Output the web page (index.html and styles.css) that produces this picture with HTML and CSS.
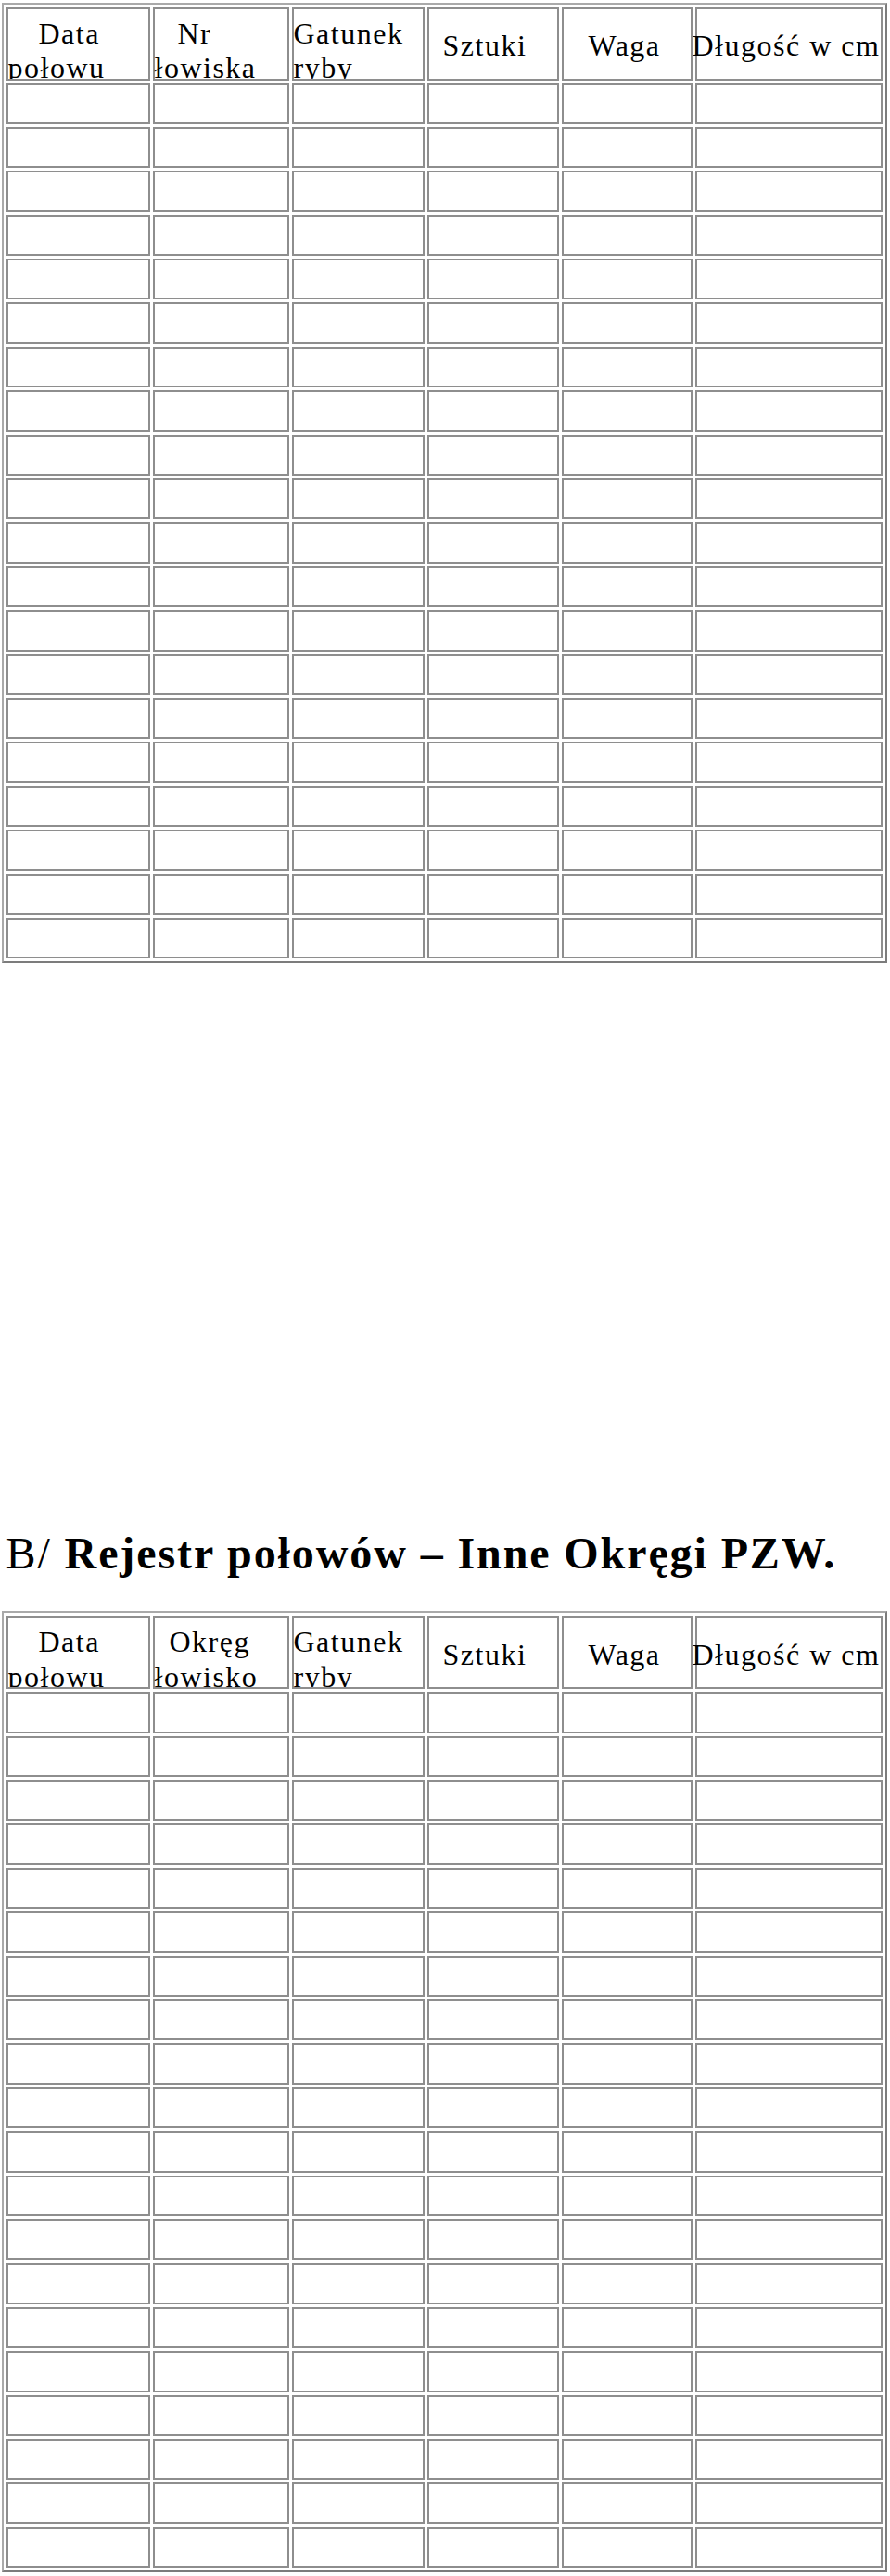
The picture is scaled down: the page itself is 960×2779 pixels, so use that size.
FILE: index.html
```html
<!DOCTYPE html>
<html lang="pl">
<head>
<meta charset="utf-8">
<title>Rejestr połowów</title>
<link rel="stylesheet" href="styles.css">
</head>
<body>
<table class="grid">
  <colgroup><col class="c1"><col class="c2"><col class="c3"><col class="c4"><col class="c5"><col class="c6"></colgroup>
  <thead>
    <tr>
      <th><div class="h two in-data">Data połowu</div></th>
      <th><div class="h two in-nr">Nr łowiska</div></th>
      <th><div class="h two">Gatunek ryby</div></th>
      <th><div class="h one in-sztuki">Sztuki</div></th>
      <th><div class="h one in-waga">Waga</div></th>
      <th><div class="h one in-dl">Długość w cm</div></th>
    </tr>
  </thead>
  <tbody>
    <tr><td></td><td></td><td></td><td></td><td></td><td></td></tr>
    <tr><td></td><td></td><td></td><td></td><td></td><td></td></tr>
    <tr><td></td><td></td><td></td><td></td><td></td><td></td></tr>
    <tr><td></td><td></td><td></td><td></td><td></td><td></td></tr>
    <tr><td></td><td></td><td></td><td></td><td></td><td></td></tr>
    <tr><td></td><td></td><td></td><td></td><td></td><td></td></tr>
    <tr><td></td><td></td><td></td><td></td><td></td><td></td></tr>
    <tr><td></td><td></td><td></td><td></td><td></td><td></td></tr>
    <tr><td></td><td></td><td></td><td></td><td></td><td></td></tr>
    <tr><td></td><td></td><td></td><td></td><td></td><td></td></tr>
    <tr><td></td><td></td><td></td><td></td><td></td><td></td></tr>
    <tr><td></td><td></td><td></td><td></td><td></td><td></td></tr>
    <tr><td></td><td></td><td></td><td></td><td></td><td></td></tr>
    <tr><td></td><td></td><td></td><td></td><td></td><td></td></tr>
    <tr><td></td><td></td><td></td><td></td><td></td><td></td></tr>
    <tr><td></td><td></td><td></td><td></td><td></td><td></td></tr>
    <tr><td></td><td></td><td></td><td></td><td></td><td></td></tr>
    <tr><td></td><td></td><td></td><td></td><td></td><td></td></tr>
    <tr><td></td><td></td><td></td><td></td><td></td><td></td></tr>
    <tr><td></td><td></td><td></td><td></td><td></td><td></td></tr>
  </tbody>
</table>

<h2 class="title">B/ <b>Rejestr połowów – Inne Okręgi PZW.</b></h2>

<table class="grid">
  <colgroup><col class="c1"><col class="c2"><col class="c3"><col class="c4"><col class="c5"><col class="c6"></colgroup>
  <thead>
    <tr>
      <th><div class="h two in-data">Data połowu</div></th>
      <th><div class="h two in-okreg">Okręg łowisko</div></th>
      <th><div class="h two">Gatunek ryby</div></th>
      <th><div class="h one in-sztuki">Sztuki</div></th>
      <th><div class="h one in-waga">Waga</div></th>
      <th><div class="h one in-dl">Długość w cm</div></th>
    </tr>
  </thead>
  <tbody>
    <tr><td></td><td></td><td></td><td></td><td></td><td></td></tr>
    <tr><td></td><td></td><td></td><td></td><td></td><td></td></tr>
    <tr><td></td><td></td><td></td><td></td><td></td><td></td></tr>
    <tr><td></td><td></td><td></td><td></td><td></td><td></td></tr>
    <tr><td></td><td></td><td></td><td></td><td></td><td></td></tr>
    <tr><td></td><td></td><td></td><td></td><td></td><td></td></tr>
    <tr><td></td><td></td><td></td><td></td><td></td><td></td></tr>
    <tr><td></td><td></td><td></td><td></td><td></td><td></td></tr>
    <tr><td></td><td></td><td></td><td></td><td></td><td></td></tr>
    <tr><td></td><td></td><td></td><td></td><td></td><td></td></tr>
    <tr><td></td><td></td><td></td><td></td><td></td><td></td></tr>
    <tr><td></td><td></td><td></td><td></td><td></td><td></td></tr>
    <tr><td></td><td></td><td></td><td></td><td></td><td></td></tr>
    <tr><td></td><td></td><td></td><td></td><td></td><td></td></tr>
    <tr><td></td><td></td><td></td><td></td><td></td><td></td></tr>
    <tr><td></td><td></td><td></td><td></td><td></td><td></td></tr>
    <tr><td></td><td></td><td></td><td></td><td></td><td></td></tr>
    <tr><td></td><td></td><td></td><td></td><td></td><td></td></tr>
    <tr><td></td><td></td><td></td><td></td><td></td><td></td></tr>
    <tr><td></td><td></td><td></td><td></td><td></td><td></td></tr>
  </tbody>
</table>
</body>
</html>
```

FILE: styles.css
```css
html {
  background: #ffffff;
}

body {
  margin: 2.5px 0 3px 1.5px;
  font-family: "Liberation Serif", "Times New Roman", serif;
  color: #000000;
  background: #ffffff;
}

.grid {
  width: 955px;
  table-layout: fixed;
  border-collapse: separate;
  border-spacing: 3px;
  border: 2px solid;
  border-color: #a9a9a9 #7c7c7c #7c7c7c #a9a9a9;
}

.grid .c1 { width: 155px; }
.grid .c2 { width: 147px; }
.grid .c3 { width: 143px; }
.grid .c4 { width: 142px; }
.grid .c5 { width: 141px; }
.grid .c6 { width: 202px; }

.grid th,
.grid td {
  padding: 0;
  border: 2px solid #8e8e8e;
}

.grid th {
  font-weight: normal;
  text-align: left;
  vertical-align: top;
}

.grid tbody tr {
  height: 44.4px;
}

.h {
  box-sizing: border-box;
  height: 75px;
  overflow-x: visible;
  overflow-y: clip;
  font-size: 32px;
  line-height: 37.7px;
  letter-spacing: 1.5px;
}

.h.two {
  padding-top: 8px;
}

.h.one {
  padding-top: 21.5px;
  white-space: nowrap;
}

.in-data { text-indent: 33px; }
.in-nr { text-indent: 25px; }
.in-okreg { text-indent: 16px; }
.in-sztuki { text-indent: 15px; }
.in-waga { text-indent: 27px; }
.in-dl { text-indent: -5px; }

.title {
  margin: 609px 0 34px 5px;
  font-size: 48px;
  line-height: 56px;
  letter-spacing: 1.9px;
  font-weight: normal;
  white-space: nowrap;
}

.title b {
  font-weight: bold;
}
```
